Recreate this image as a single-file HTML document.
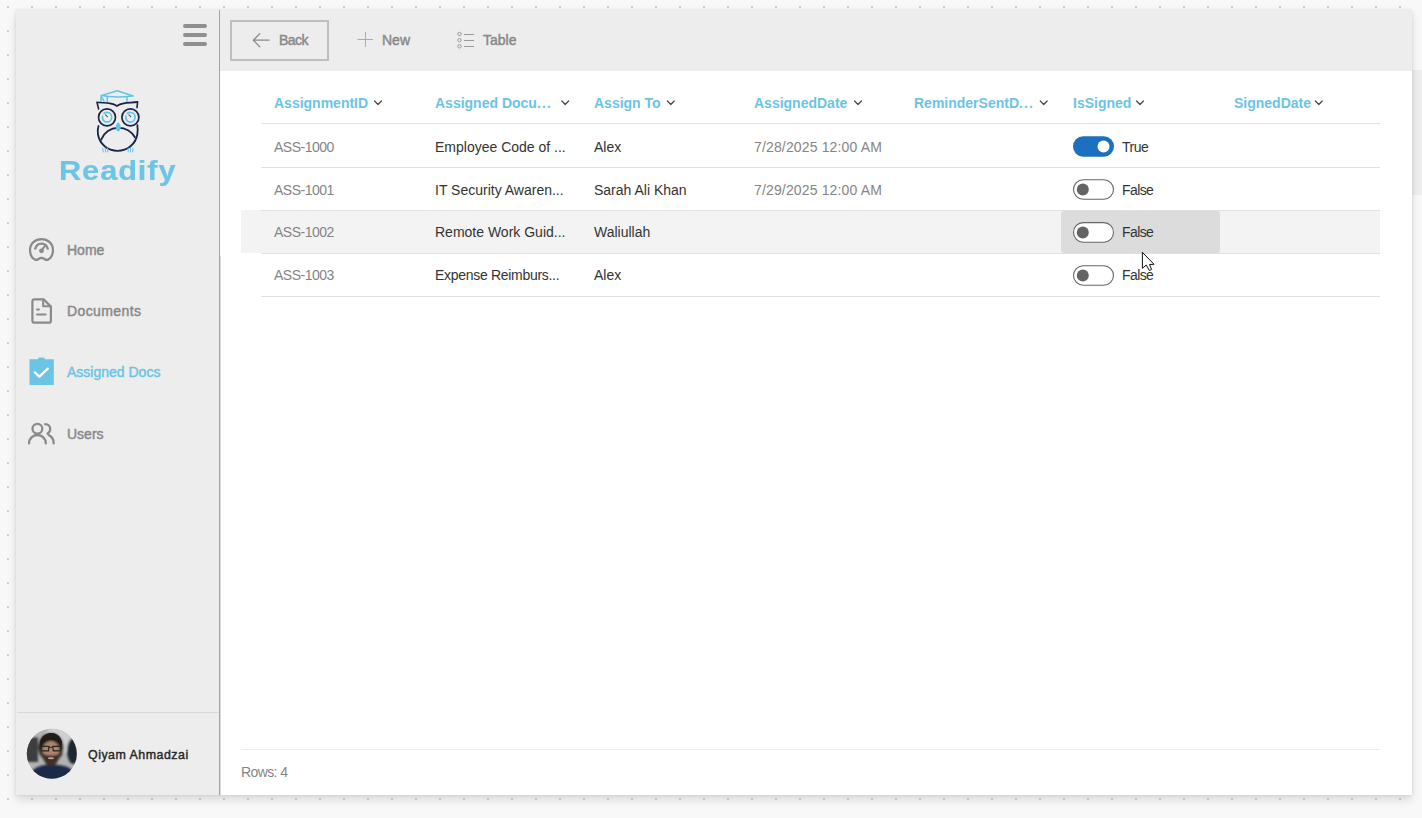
<!DOCTYPE html>
<html>
<head>
<meta charset="utf-8">
<style>
*{margin:0;padding:0;box-sizing:border-box;}
html,body{width:1422px;height:818px;overflow:hidden;background:#f8f8f8;font-family:"Liberation Sans",sans-serif;}
.abs{position:absolute;}
#dots{position:absolute;left:0;top:0;}
#frame{position:absolute;left:16px;top:10px;width:1396px;height:785px;background:#ededed;box-shadow:0 0 3px rgba(0,0,0,0.10),0 5px 9px rgba(0,0,0,0.12);overflow:hidden;}
#scrollbar{position:absolute;left:1412px;top:70px;width:10px;height:125px;background:#eeeeee;}
.t{position:absolute;white-space:nowrap;line-height:14px;font-size:14px;}
.menu{font-weight:normal;color:#898989;font-size:14px;-webkit-text-stroke:0.45px currentColor;}
.hdr{font-weight:bold;color:#6cc4e4;font-size:14px;}
.cell{color:#858585;font-size:14px;}
.dark{color:#333333;}
.hl{position:absolute;height:1px;background:#e1e1e1;}
</style>
</head>
<body>
<svg id="dots" width="1422" height="818">
  <defs>
    <pattern id="dp" x="7" y="6" width="24" height="24" patternUnits="userSpaceOnUse">
      <rect x="0" y="0" width="2" height="2" fill="#cfcfcf"/>
    </pattern>
  </defs>
  <rect x="0" y="0" width="1422" height="818" fill="url(#dp)"/>
</svg>
<div id="scrollbar"></div>
<div id="frame"></div>

<!-- sidebar separator -->
<div class="abs" style="left:219px;top:10px;width:1px;height:785px;background:#a3a3a3;"></div>
<div class="abs" style="left:220px;top:256px;width:1px;height:539px;background:#dedede;z-index:1;"></div>
<!-- content white -->
<div class="abs" style="left:220px;top:71px;width:1192px;height:724px;background:#ffffff;"></div>
<!-- sidebar bottom separator -->
<div class="abs" style="left:17px;top:712px;width:202px;height:1px;background:#d8d8d8;"></div>

<!-- hamburger -->
<div class="abs" style="left:183px;top:24px;width:24px;height:4px;border-radius:2px;background:#8f8f8f;"></div>
<div class="abs" style="left:183px;top:33px;width:24px;height:4px;border-radius:2px;background:#8f8f8f;"></div>
<div class="abs" style="left:183px;top:42px;width:24px;height:4px;border-radius:2px;background:#8f8f8f;"></div>

<!-- menu text -->
<div class="t menu" style="left:67px;top:243px;">Home</div>
<div class="t menu" style="left:67px;top:304px;letter-spacing:0.4px;">Documents</div>
<div class="t menu" style="left:67px;top:365px;color:#6cc4e4;">Assigned Docs</div>
<div class="t menu" style="left:67px;top:427px;">Users</div>

<!-- user -->
<div class="t" style="left:88px;top:747.5px;font-size:12.4px;font-weight:normal;color:#262626;letter-spacing:0.5px;-webkit-text-stroke:0.4px #262626;">Qiyam Ahmadzai</div>

<!-- toolbar -->
<div class="abs" style="left:230px;top:20px;width:99px;height:41px;border:2px solid #bebebe;"></div>
<div class="t menu" style="left:279px;top:33px;letter-spacing:-0.5px;">Back</div>
<div class="t menu" style="left:382px;top:33px;">New</div>
<div class="t menu" style="left:483px;top:33px;">Table</div>

<!-- table header -->
<div class="t hdr" style="left:274px;top:96px;">AssignmentID</div>
<div class="t hdr" style="left:435px;top:96px;">Assigned Docu<span style="letter-spacing:1.1px">...</span></div>
<div class="t hdr" style="left:594px;top:96px;">Assign To</div>
<div class="t hdr" style="left:754px;top:96px;">AssignedDate</div>
<div class="t hdr" style="left:914px;top:96px;">ReminderSentD<span style="letter-spacing:1.1px">...</span></div>
<div class="t hdr" style="left:1073px;top:96px;">IsSigned</div>
<div class="t hdr" style="left:1234px;top:96px;">SignedDate</div>

<!-- hovered row -->
<div class="abs" style="left:241px;top:210px;width:1139px;height:43px;background:#f3f3f3;"></div>
<div class="abs" style="left:1061px;top:211px;width:159px;height:42px;border-radius:3px;background:#dcdcdc;"></div>

<div class="hl" style="left:261px;top:123px;width:1119px;"></div>
<div class="hl" style="left:261px;top:167px;width:1119px;"></div>
<div class="hl" style="left:261px;top:210px;width:1119px;"></div>
<div class="hl" style="left:261px;top:253px;width:1119px;"></div>
<div class="hl" style="left:261px;top:296px;width:1119px;"></div>

<!-- rows -->
<div class="t cell" style="left:274px;top:140px;;letter-spacing:-0.5px;">ASS-1000</div>
<div class="t cell dark" style="left:435px;top:140px;">Employee Code of ...</div>
<div class="t cell dark" style="left:594px;top:140px;">Alex</div>
<div class="t cell" style="left:754px;top:140px;letter-spacing:0.15px;">7/28/2025 12:00 AM</div>
<div class="t cell dark" style="left:1122px;top:140px;letter-spacing:-0.5px;">True</div>

<div class="t cell" style="left:274px;top:183px;;letter-spacing:-0.5px;">ASS-1001</div>
<div class="t cell dark" style="left:435px;top:183px;">IT Security Awaren...</div>
<div class="t cell dark" style="left:594px;top:183px;">Sarah Ali Khan</div>
<div class="t cell" style="left:754px;top:183px;letter-spacing:0.15px;">7/29/2025 12:00 AM</div>
<div class="t cell dark" style="left:1122px;top:183px;letter-spacing:-0.6px;">False</div>

<div class="t cell" style="left:274px;top:225px;;letter-spacing:-0.5px;">ASS-1002</div>
<div class="t cell dark" style="left:435px;top:225px;">Remote Work Guid...</div>
<div class="t cell dark" style="left:594px;top:225px;">Waliullah</div>
<div class="t cell dark" style="left:1122px;top:225px;letter-spacing:-0.6px;">False</div>

<div class="t cell" style="left:274px;top:268px;;letter-spacing:-0.5px;">ASS-1003</div>
<div class="t cell dark" style="left:435px;top:268px;letter-spacing:-0.3px;">Expense Reimburs...</div>
<div class="t cell dark" style="left:594px;top:268px;">Alex</div>
<div class="t cell dark" style="left:1122px;top:268px;letter-spacing:-0.6px;">False</div>


<!-- icon overlay -->
<svg class="abs" style="left:0;top:0;" width="1422" height="818" viewBox="0 0 1422 818">
  <!-- Home gauge -->
  <g fill="none" stroke="#8a8a8a" stroke-width="2.2" stroke-linecap="round" stroke-linejoin="round">
    <path d="M35.2,259.8 C31.5,258 30,254.5 30,250 C30,243.5 35.3,239.2 41.5,239.2 C47.7,239.2 53,243.5 53,250 C53,254.5 51.5,258 47.8,259.8 C45.5,260.8 44,257.8 41.5,257.8 C39,257.8 37.5,260.8 35.2,259.8 Z"/>
    <path d="M35,249.5 C35.8,245.8 38.5,243.6 41.5,243.6 C44.5,243.6 47.2,245.8 48,249.5" stroke-width="2.4" stroke-linecap="butt"/>
    <path d="M41.5,250.5 L44.6,246.4" stroke-width="2"/>
  </g>
  <circle cx="41.5" cy="250.8" r="2.4" fill="#8a8a8a"/>
  <!-- Documents -->
  <g fill="none" stroke="#8a8a8a" stroke-width="2" stroke-linejoin="round" stroke-linecap="round">
    <path d="M34.4,299.3 L43.6,299.3 L50.9,306.6 L50.9,320.7 Q50.9,322.7 48.9,322.7 L34.4,322.7 Q32.4,322.7 32.4,320.7 L32.4,301.3 Q32.4,299.3 34.4,299.3 Z" stroke-width="2.2"/>
    <path d="M43.2,299.6 L43.2,306.3 L50.5,306.3"/>
    <path d="M37,309.6 L38.9,309.6 M37,314.6 L45.6,314.6"/>
  </g>
  <!-- Assigned Docs -->
  <path d="M29.5,359.3 L37.8,359.3 C38.5,357.3 40,357.6 41.4,357.6 C42.8,357.6 44.3,357.3 45,359.3 L53.8,359.3 L53.8,385 L29.5,385 Z" fill="#6cc4e4"/>
  <path d="M34.8,372.4 L39.4,376.6 L47.8,368.6" fill="none" stroke="#ffffff" stroke-width="2.3" stroke-linecap="round" stroke-linejoin="round"/>
  <!-- Users -->
  <g fill="none" stroke="#8a8a8a" stroke-width="2.3" stroke-linecap="round">
    <circle cx="37.4" cy="428.8" r="4.9"/>
    <path d="M29,443.4 C29,438.4 32.8,435 37.4,435 C42,435 45.8,438.4 45.8,443.4"/>
    <path d="M45.2,424.2 C48.3,424.2 50.2,426.3 50.2,429 C50.2,431.2 49,432.8 47.6,433.5"/>
    <path d="M48.6,435 C51.6,436.4 53.7,439.5 53.7,443.4"/>
  </g>
  <!-- Back arrow -->
  <g fill="none" stroke="#8a8a8a" stroke-width="1.3" stroke-linecap="round" stroke-linejoin="round">
    <path d="M253.4,40.2 L269,40.2 M259.8,33.6 L253.3,40.2 L259.8,46.8"/>
  </g>
  <!-- Plus -->
  <path d="M365.5,32 L365.5,47 M357.5,39.5 L373,39.5" stroke="#ababab" stroke-width="1" fill="none"/>
  <!-- Table list -->
  <g fill="none" stroke="#999999" stroke-width="1">
    <circle cx="459.5" cy="34" r="1.7"/><circle cx="459.5" cy="40.2" r="1.7"/><circle cx="459.5" cy="46.3" r="1.7"/>
    <path d="M464,34.5 L474,34.5 M464,40.5 L474,40.5 M464,46.5 L474,46.5"/>
  </g>
  <!-- header chevrons -->
  <g fill="none" stroke="#4a4a4a" stroke-width="1.3" stroke-linecap="round" stroke-linejoin="round">
    <path d="M374.6,101 L378,104.5 L381.4,101"/>
    <path d="M561.8,101 L565.2,104.5 L568.6,101"/>
    <path d="M667.4,101 L670.8,104.5 L674.2,101"/>
    <path d="M854.6,101 L858,104.5 L861.4,101"/>
    <path d="M1040.3,101 L1043.7,104.5 L1047.1,101"/>
    <path d="M1136.6,101 L1140,104.5 L1143.4,101"/>
    <path d="M1315.4,101 L1318.8,104.5 L1322.2,101"/>
  </g>
  <!-- toggles -->
  <rect x="1073" y="136.2" width="41" height="20.5" rx="10.25" fill="#1d6fbf"/>
  <circle cx="1103.5" cy="146.45" r="6" fill="#ffffff"/>
  <rect x="1073.5" y="179.7" width="40" height="19.6" rx="9.8" fill="#ffffff" stroke="#666" stroke-width="1.1"/>
  <circle cx="1082.8" cy="189.5" r="6" fill="#646464"/>
  <rect x="1073.5" y="222.6" width="40" height="19.6" rx="9.8" fill="#ffffff" stroke="#666" stroke-width="1.1"/>
  <circle cx="1082.8" cy="232.4" r="6" fill="#646464"/>
  <rect x="1073.5" y="265.7" width="40" height="19.6" rx="9.8" fill="#ffffff" stroke="#666" stroke-width="1.1"/>
  <circle cx="1082.8" cy="275.5" r="6" fill="#646464"/>
</svg>


<!-- logo + avatar + cursor overlay -->
<svg class="abs" style="left:0;top:0;" width="1422" height="818" viewBox="0 0 1422 818">
  <defs>
    <clipPath id="av"><circle cx="51.8" cy="753.7" r="25"/></clipPath>
    <filter id="bl" x="-20%" y="-20%" width="140%" height="140%"><feGaussianBlur stdDeviation="0.9"/></filter>
    <filter id="bl2" x="-20%" y="-20%" width="140%" height="140%"><feGaussianBlur stdDeviation="0.5"/></filter>
  </defs>
  <!-- owl -->
  <g fill="none" stroke-linecap="round" stroke-linejoin="round">
    <g stroke="#64c3e8" stroke-width="1.5">
      <path d="M117.2,90.8 L101.2,95.6 C106,96.5 111.5,97 117.2,97 C122.8,97 128.2,96.6 133.2,96 Z"/>
      <path d="M107.3,97.2 L107.3,102 M127,97.6 L127,102 M101.2,96 L100.8,101.8 M101.8,97.5 L104,101.2"/>
    </g>
    <g stroke="#182544" stroke-width="1.6">
      <path d="M98.6,109 L97,102.2 C101,102.8 106,102.6 110,103.4 C113.2,104 115.5,105 116.9,106 C118.3,105 120.6,104 123.8,103.4 C127.8,102.6 133,102.7 137.6,101.9 L137,107.6"/>
      <circle cx="107" cy="117.3" r="8.5" stroke-width="1.7"/>
      <circle cx="130.4" cy="117.3" r="8.5" stroke-width="1.7"/>
      <path d="M98.5,126 C97.5,129 97.6,132 98,134.5 C99.7,144 107.5,150.8 117.5,150.8 C127.5,150.8 135.7,144 137.3,134.5 C137.8,131.5 137.8,128.5 137.4,125.2" stroke-width="1.8"/>
      <path d="M101.2,139.6 C104,132.5 110.5,127.8 118.2,127.8 C125.5,127.8 131.8,131.8 134.9,137.3" stroke-width="1.8"/>
      <path d="M105.5,114.9 L107.4,116.7" stroke-width="1.1" stroke="#3b5a80"/>
      <path d="M128.9,114.9 L130.8,116.7" stroke-width="1.1" stroke="#3b5a80"/>
    </g>
    <g stroke="#64c3e8" stroke-width="1.7">
      <path d="M102.4,116 C102.1,119.5 104.1,122.2 106.9,122.2 C109.6,122.2 111.7,120 111.7,117.3 C111.7,114.5 109.6,112.4 106.9,112.4 C105.8,112.4 104.8,112.7 104,113.3"/>
      <path d="M125.8,116 C125.5,119.5 127.5,122.2 130.3,122.2 C133,122.2 135.1,120 135.1,117.3 C135.1,114.5 133,112.4 130.3,112.4 C129.2,112.4 128.2,112.7 127.4,113.3"/>
      <path d="M102.7,148.2 L103.3,152 M105.2,148 L105.6,152 M107.6,148.2 L107.8,152" stroke-width="1"/>
      <path d="M128.2,148.2 L128.2,152 M130.6,148 L130.4,152 M133,148.2 L132.6,152" stroke-width="1"/>
    </g>
    <path d="M118.2,123 C116.6,124.6 115.9,126.6 116.3,128.2 C116.6,129.6 117.4,130.6 118.2,131 C119,130.6 119.8,129.6 120.1,128.2 C120.5,126.6 119.8,124.6 118.2,123 Z" fill="#64c3e8" stroke="#64c3e8" stroke-width="1.2"/>
  </g>
  <!-- avatar -->
  <g clip-path="url(#av)">
    <rect x="26" y="728" width="52" height="52" fill="#b2b2b2"/>
    <g filter="url(#bl)">
      <ellipse cx="58" cy="740" rx="14" ry="14" fill="#cfcfcf"/>
      <rect x="24" y="737.5" width="14" height="24.5" fill="#3c3c3c"/>
      <ellipse cx="73.5" cy="751" rx="6.5" ry="13" fill="#1f2632"/>
      <path d="M28,781 L31,772 C35,767 42,764.5 51,764.5 C59,764.5 66,765.5 71,769 L78,781 Z" fill="#1b2c4a"/>
      <ellipse cx="51" cy="747.5" rx="12.5" ry="14.5" fill="#211b18"/>
      <ellipse cx="51" cy="752.5" rx="9.2" ry="11.5" fill="#ad8470"/>
      <path d="M41.8,750 C41.8,758 45,766 51,766.3 C57,766 60.2,758 60.2,750 C59.2,754.5 56.5,755.5 51,755.5 C45.5,755.5 42.8,754.5 41.8,750 Z" fill="#3f2d26"/>
    </g>
    <g filter="url(#bl2)">
      <path d="M40,742 C41.5,735.5 46.5,733 51,733 C56,733 60.5,735.5 62,742 L61.5,746 C59.5,741 55.5,739.8 51,739.8 C46.5,739.8 42.5,741 40.5,746 Z" fill="#211b18"/>
      <path d="M40.8,746.3 L49,746.3 L48.5,750.8 L41.6,750.8 Z M52.8,746.3 L61,746.3 L60.2,750.8 L53.3,750.8 Z" fill="none" stroke="#2a2522" stroke-width="1.2"/>
      <path d="M49,747.3 L52.8,747.3" stroke="#2a2522" stroke-width="0.9"/>
      <ellipse cx="51" cy="758.3" rx="3.2" ry="1" fill="#bca395"/>
    </g>
  </g>
  <!-- cursor -->
  <path d="M1142.4,252.3 L1142.4,268.3 L1146.3,265 L1149.4,270.6 L1151.6,269.4 L1149.5,264.5 L1154,264.3 Z" fill="#ffffff" stroke="#111111" stroke-width="1" stroke-linejoin="round"/>
</svg>
<div class="t" style="left:59px;top:157px;font-size:28px;line-height:28px;font-weight:bold;color:#6dc5e5;letter-spacing:0.8px;transform:scaleX(1.1);transform-origin:0 0;-webkit-text-stroke:0.2px #6dc5e5;">Readify</div>

<!-- footer -->
<div class="abs" style="left:241px;top:749px;width:1139px;height:1px;background:#ebebeb;"></div>
<div class="t cell" style="left:241px;top:765px;letter-spacing:-0.6px;">Rows: 4</div>

</body>
</html>
